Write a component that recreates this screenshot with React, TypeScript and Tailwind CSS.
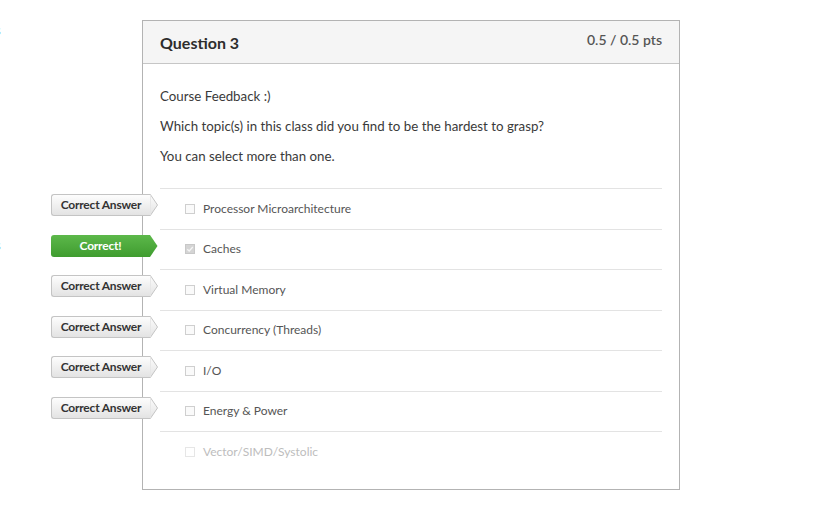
import React from 'react';

const ANSWERS = [
  { text: 'Processor Microarchitecture', badge: 'answer' },
  { text: 'Caches', badge: 'correct', checked: true },
  { text: 'Virtual Memory', badge: 'answer' },
  { text: 'Concurrency (Threads)', badge: 'answer' },
  { text: 'I/O', badge: 'answer' },
  { text: 'Energy & Power', badge: 'answer' },
  { text: 'Vector/SIMD/Systolic', faded: true },
];

const Badge: React.FC<{ kind: string }> = ({ kind }) => {
  const green = kind === 'correct';
  return (
    <div className="absolute left-[-109px] top-[5px] flex h-[22px]">
      <div
        className={`flex h-full w-[99px] items-center justify-center rounded-l-[3px] text-[12px] font-bold tracking-[-0.2px] ${
          green
            ? 'bg-gradient-to-b from-[#5cb84a] to-[#3f9c2f] text-white'
            : 'border border-r-0 border-[#c4c4c4] bg-gradient-to-b from-[#fdfdfd] to-[#e3e3e3] text-[#333]'
        }`}
      >
        {green ? 'Correct!' : 'Correct Answer'}
      </div>
      {/* arrow tip */}
      <svg viewBox="0 0 8 22" className="h-[22px] w-[8px]">
        <defs>
          <linearGradient id={green ? 'tipg' : 'tipw'} x1="0" y1="0" x2="0" y2="1">
            <stop offset="0" stopColor={green ? '#5cb84a' : '#fdfdfd'} />
            <stop offset="1" stopColor={green ? '#3f9c2f' : '#e3e3e3'} />
          </linearGradient>
        </defs>
        <polygon
          points="0,0 7.5,11 0,22"
          fill={`url(#${green ? 'tipg' : 'tipw'})`}
          stroke={green ? 'none' : '#c4c4c4'}
          strokeWidth="1"
        />
        {!green && <line x1="0" y1="0.5" x2="0" y2="21.5" stroke={green ? '#3f9c2f' : '#f0f0f0'} strokeWidth="1.2" />}
      </svg>
    </div>
  );
};

const Checkbox: React.FC<{ checked?: boolean; faded?: boolean }> = ({ checked, faded }) => (
  <div
    className={`flex h-[10px] w-[10px] items-center justify-center border ${
      checked ? 'border-[#c8c8c8] bg-[#d4d4d4]' : faded ? 'border-[#e6e6e6] bg-white' : 'border-[#cfcfcf] bg-[#fafafa]'
    }`}
  >
    {checked && (
      <svg viewBox="0 0 10 10" className="h-[8px] w-[8px]">
        <path d="M1.5 5.2 L4 7.5 L8.5 2.5" fill="none" stroke="#f5f5f5" strokeWidth="1.6" />
      </svg>
    )}
  </div>
);

export default function App() {
  return (
    <div className="relative min-h-[521px] w-[820px] overflow-hidden bg-white font-['Lato','Open_Sans',sans-serif]">
      <span className="absolute left-[-5px] top-[21px] text-[13px] text-[#2d7bbf]">s</span>
      <span className="absolute left-[-5px] top-[236px] text-[13px] text-[#2d7bbf]">s</span>

      <div className="ml-[142px] mt-[20px] w-[538px] border border-[#b3b3b3]">
        <div className="flex h-[43px] items-start justify-between border-b border-[#c6c6c6] bg-[#f5f5f5] px-[17px]">
          <h2 className="mt-[12px] text-[16px] font-bold leading-[20px] text-[#2d2d2d]">Question 3</h2>
          <span className="mt-[10px] text-[14px] font-semibold leading-[18px] text-[#555]">0.5 / 0.5 pts</span>
        </div>

        <div className="px-[17px] pb-[17px] pt-[22px]">
          <div className="flex flex-col gap-[10px] text-[13.3px] leading-[20px] text-[#3a3a3a]">
            <p>Course Feedback :)</p>
            <p>Which topic(s) in this class did you find to be the hardest to grasp?</p>
            <p>You can select more than one.</p>
          </div>

          <div className="mt-[22px]">
            {ANSWERS.map((a, i) => (
              <div
                key={i}
                className="relative flex h-[40.5px] items-center gap-[8px] border-t border-[#e3e3e3] pl-[25px]"
              >
                {a.badge && <Badge kind={a.badge} />}
                <Checkbox checked={a.checked} faded={a.faded} />
                <span className={`text-[12px] ${a.faded ? 'text-[#bdbdbd]' : 'text-[#555]'}`}>{a.text}</span>
              </div>
            ))}
          </div>
        </div>
      </div>
    </div>
  );
}
